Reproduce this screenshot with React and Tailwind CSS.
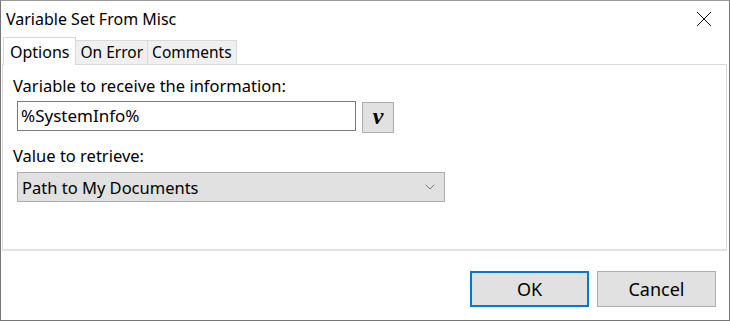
import { ChevronDown } from "lucide-react";

const FONT = "font-['Noto_Sans',sans-serif]";

function Tab({ label, active }) {
  if (active) {
    return (
      <div className="relative z-10 h-[28px] px-[6px] pt-[3px] bg-white border border-[#d9d9d9] border-b-0 text-[16px] leading-[22px]">
        {label}
      </div>
    );
  }
  return (
    <div className="mt-[3px] h-[25px] px-[4px] bg-[#f0f0f0] border border-[#d9d9d9] border-l-0 border-b-0 text-[15.5px] leading-[22px]">
      {label}
    </div>
  );
}

export default function App() {
  return (
    <div className={"w-[730px] h-[321px] bg-white border border-[#767676] border-t-[#9a9a9a] text-black flex flex-col " + FONT}>
      {/* title bar */}
      <div className="h-[36px] flex items-start justify-between">
        <div className="pl-[5px] pt-[7px] text-[16px] leading-[22px]">Variable Set From Misc</div>
        <svg className="mt-[10px] mr-[17px]" width="16" height="16" viewBox="0 0 16 16">
          <path d="M1 1 L15 15 M15 1 L1 15" stroke="#111" strokeWidth="1" fill="none" />
        </svg>
      </div>

      {/* tabs */}
      <div className="flex pl-[2px] -mb-px">
        <Tab label="Options" active />
        <Tab label="On Error" />
        <Tab label="Comments" />
      </div>

      {/* panel */}
      <div className="mx-[1px] mr-[2px] h-[187px] border border-[#d9d9d9] border-b-2 border-b-[#e3e3e3] pl-[10px] pt-[11px]">
        <div className="text-[16.5px] leading-[20px]">Variable to receive the information:</div>
        <div className="flex items-start mt-[5px] ml-[4px] gap-[6px]">
          <div className="w-[339px] h-[30px] border border-[#7a7a7a] pl-[3px] text-[17px] leading-[27px]">%SystemInfo%</div>
          <div className="mt-[1px] w-[32px] h-[31px] bg-[#e1e1e1] border border-[#adadad] flex items-center justify-center font-['Liberation_Serif',serif] italic font-bold text-[24px] leading-none pb-[4px]">
            v
          </div>
        </div>
        <div className="mt-[13px] text-[16.5px] leading-[20px]">Value to retrieve:</div>
        <div className="mt-[6px] ml-[4px] w-[428px] h-[30px] bg-[#e1e1e1] border border-[#adadad] flex items-center justify-between pl-[4px] pr-[6px]">
          <span className="text-[16.5px] leading-[27px]">Path to My Documents</span>
          <ChevronDown className="w-[16px] h-[16px] text-[#444]" strokeWidth={1} />
        </div>
      </div>

      {/* buttons */}
      <div className="flex justify-end gap-[8px] pr-[13px] mt-[20px]">
        <div className="w-[119px] h-[36px] border-2 border-[#0078d7] bg-[#e1e1e1] flex items-center justify-center text-[18px]">OK</div>
        <div className="w-[119px] h-[36px] border border-[#adadad] bg-[#e1e1e1] flex items-center justify-center text-[18px]">Cancel</div>
      </div>
    </div>
  );
}
